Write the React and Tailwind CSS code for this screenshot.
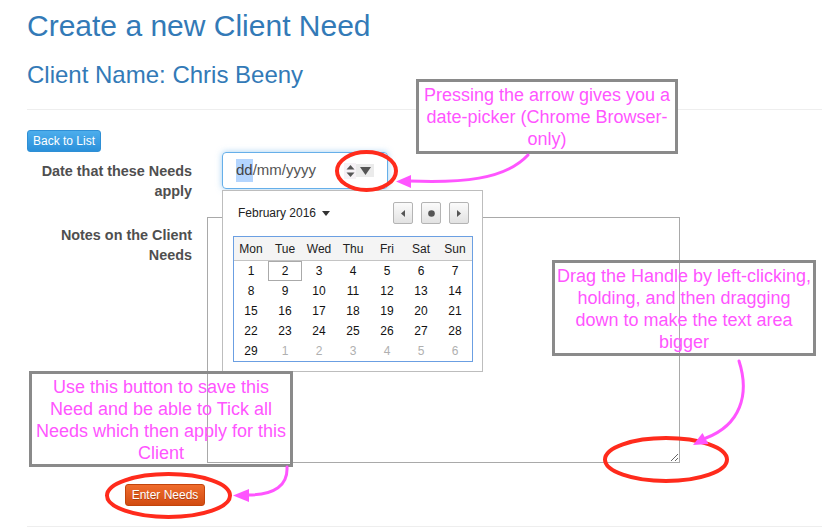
import React from 'react';

const weekDays = ['Mon', 'Tue', 'Wed', 'Thu', 'Fri', 'Sat', 'Sun'];

const weeks = [
  [1, 2, 3, 4, 5, 6, 7],
  [8, 9, 10, 11, 12, 13, 14],
  [15, 16, 17, 18, 19, 20, 21],
  [22, 23, 24, 25, 26, 27, 28],
  [29, -1, -2, -3, -4, -5, -6],
];

const NavButton = ({ children }) => (
  <div className="flex h-[22px] w-[20px] items-center justify-center rounded-[2px] border border-[#b4b4b4] bg-gradient-to-b from-[#fbfbfb] to-[#e2e2e2]">
    {children}
  </div>
);

const DatePicker = () => (
  <div className="absolute left-[222px] top-[190px] h-[182px] w-[261px] border border-[#bdbdbd] bg-white pl-[10px]">
    <div className="flex h-[45px] items-start pt-[11px] pl-[5px] pr-[4px]" style={{ width: 240 }}>
      <div className="flex h-[22px] items-center gap-[6px] text-[12px] text-[#222]">
        <span>February 2016</span>
        <svg width="8" height="5" viewBox="0 0 8 5">
          <path d="M0 0 L8 0 L4 5 Z" fill="#333" />
        </svg>
      </div>
      <div className="ml-auto flex gap-[8px]">
        <NavButton>
          <svg width="4" height="7" viewBox="0 0 4 7">
            <path d="M4 0 L0 3.5 L4 7 Z" fill="#555" />
          </svg>
        </NavButton>
        <NavButton>
          <svg width="7" height="7" viewBox="0 0 7 7">
            <circle cx="3.5" cy="3.5" r="3.3" fill="#555" />
          </svg>
        </NavButton>
        <NavButton>
          <svg width="4" height="7" viewBox="0 0 4 7">
            <path d="M0 0 L4 3.5 L0 7 Z" fill="#555" />
          </svg>
        </NavButton>
      </div>
    </div>
    <div className="w-[240px] border border-[#6b9fe2] text-[12px]">
      <div className="grid h-[24px] grid-cols-7 items-center border-b border-[#c4c4c4] bg-[#f4f4f4] text-[#222]">
        {weekDays.map(d => (
          <div key={d} className="text-center">{d}</div>
        ))}
      </div>
      {weeks.map((week, i) => (
        <div key={i} className="grid h-[20px] grid-cols-7">
          {week.map(n => (
            <div
              key={n}
              className={
                n === 2
                  ? 'flex items-center justify-center border border-[#aaa] text-[#111]'
                  : n < 0
                  ? 'flex items-center justify-center text-[#b0b0b0]'
                  : 'flex items-center justify-center text-[#111]'
              }
            >
              {Math.abs(n)}
            </div>
          ))}
        </div>
      ))}
    </div>
  </div>
);

const Callout = ({ className, lines }) => (
  <div className={`absolute border-[3px] border-[#8a8a8a] pt-[2px] text-center text-[18px] leading-[22px] text-[#ff55ff] ${className}`}>
    {lines.map(l => (
      <div key={l} className="whitespace-nowrap">{l}</div>
    ))}
  </div>
);

export default function App() {
  return (
    <div className="relative h-[531px] w-[822px] overflow-hidden bg-white font-['Liberation_Sans',Arial,sans-serif]">
      <div className="pl-[27px] pt-[9px]">
        <h2 className="text-[30px] leading-[33px] text-[#337ab7]">Create a new Client Need</h2>
        <h3 className="mt-[20px] text-[24px] leading-[26px] text-[#337ab7]">Client Name: Chris Beeny</h3>
        <div className="mt-[21px] h-px bg-[#eeeeee]" />

        <button className="mt-[20px] flex h-[22px] items-center rounded-[3px] border border-[#2f8fd5] bg-gradient-to-b from-[#4cadec] to-[#2a90da] px-[5px] text-[12px] text-white">
          Back to List
        </button>

        <div className="flex h-[65px]">
          <label className="w-[165px] pt-[9px] text-right text-[14.4px] font-bold leading-[20px] text-[#4f4f4f]">
            Date that these Needs apply
          </label>
          <div className="ml-[30px] flex h-[37px] w-[166px] items-center rounded-[4px] border border-[#66afe9] pl-[13px] text-[15px] text-[#555] shadow-[0_0_6px_rgba(102,175,233,0.6)]">
            <span className="bg-[#b4d5fe] text-[#444]">dd</span>
            <span>/mm/yyyy</span>
            <div className="ml-[28px] flex h-[16px] w-[12px] items-center justify-center bg-[#f6f2f6]">
              <svg width="9" height="14" viewBox="0 0 9 14">
                <path d="M0.5 5.5 L4.5 1 L8.5 5.5 Z" fill="#555" />
                <path d="M0.5 8.5 L4.5 13 L8.5 8.5 Z" fill="#555" />
              </svg>
            </div>
            <div className="flex h-[13px] w-[18px] items-center justify-center bg-[#ebebeb]">
              <svg width="11" height="8" viewBox="0 0 11 8">
                <path d="M0 0 L11 0 L5.5 8 Z" fill="#555" />
              </svg>
            </div>
          </div>
        </div>

        <div className="flex">
          <label className="w-[165px] pt-[8px] text-right text-[14.4px] font-bold leading-[20px] text-[#4f4f4f]">
            Notes on the Client Needs
          </label>
          <textarea className="ml-[15px] h-[246px] w-[473px] border border-[#a9a9a9] bg-white" />
        </div>

        <button className="ml-[98px] mt-[21px] flex h-[22px] w-[80px] items-center justify-center rounded-[3px] border border-[#c2440c] bg-gradient-to-b from-[#f06c2c] to-[#d24b10] text-[12px] text-white [text-shadow:0_1px_0_rgba(0,0,0,0.25)]">
          Enter Needs
        </button>

        <div className="mt-[20px] h-px bg-[#eeeeee]" />
      </div>

      <DatePicker />

      <Callout
        className="left-[416px] top-[79px] h-[75px] w-[262px] bg-white"
        lines={['Pressing the arrow gives you a', 'date-picker (Chrome Browser-', 'only)']}
      />
      <Callout
        className="left-[552px] top-[260px] h-[96px] w-[264px]"
        lines={['Drag the Handle by left-clicking,', 'holding, and then dragging', 'down to make the text area', 'bigger']}
      />
      <Callout
        className="left-[29px] top-[371px] h-[96px] w-[264px]"
        lines={['Use this button to save this', 'Need and be able to Tick all', 'Needs which then apply for this', 'Client']}
      />

      <svg className="pointer-events-none absolute left-0 top-0" width="822" height="531" viewBox="0 0 822 531">
        <g fill="none" stroke="#ff2b1c" strokeWidth="4">
          <ellipse cx="366.5" cy="171" rx="29.5" ry="19" />
          <ellipse cx="168.5" cy="495.5" rx="61.5" ry="21.5" />
          <ellipse cx="666" cy="459.5" rx="61" ry="21.5" />
        </g>
        <g fill="none" stroke="#ff55ff" strokeWidth="3" strokeLinecap="round">
          <path d="M528 155 C 505 180, 460 183, 409 181" />
          <path d="M739 361 C 750 395, 740 425, 706 438" />
          <path d="M287 467 C 288 485, 275 495, 248 495" />
        </g>
        <g fill="#ff55ff">
          <path d="M396 181.5 L411 175 L411 188 Z" />
          <path d="M693 445 L702.5 433 L708.5 444 Z" />
          <path d="M233 495.5 L249 489 L249 502 Z" />
        </g>
      </svg>
    </div>
  );
}
